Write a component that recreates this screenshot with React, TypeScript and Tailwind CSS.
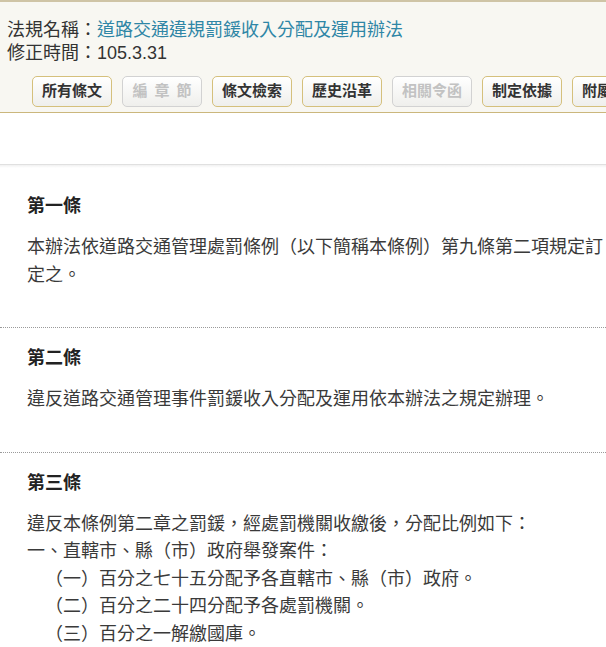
import React from 'react';

const cjk = "font-['Liberation_Sans','Noto_Sans_CJK_TC',sans-serif]";

interface ToolButton {
  label: string;
  disabled?: boolean;
  spaced?: boolean;
}

const buttons: ToolButton[] = [
  { label: '所有條文' },
  { label: '編章節', disabled: true, spaced: true },
  { label: '條文檢索' },
  { label: '歷史沿革' },
  { label: '相關令函', disabled: true },
  { label: '制定依據' },
  { label: '附屬法規' },
];

interface Article {
  title: string;
  lines: { text: string; indent?: boolean }[];
}

const articles: Article[] = [
  {
    title: '第一條',
    lines: [{ text: '本辦法依道路交通管理處罰條例（以下簡稱本條例）第九條第二項規定訂定之。' }],
  },
  {
    title: '第二條',
    lines: [{ text: '違反道路交通管理事件罰鍰收入分配及運用依本辦法之規定辦理。' }],
  },
  {
    title: '第三條',
    lines: [
      { text: '違反本條例第二章之罰鍰，經處罰機關收繳後，分配比例如下：' },
      { text: '一、直轄市、縣（市）政府舉發案件：' },
      { text: '（一）百分之七十五分配予各直轄市、縣（市）政府。', indent: true },
      { text: '（二）百分之二十四分配予各處罰機關。', indent: true },
      { text: '（三）百分之一解繳國庫。', indent: true },
      { text: '二、公路主管機關或警察機關舉發案件：' },
      { text: '（一）百分之九十九分配予各處罰機關。', indent: true },
    ],
  },
];

const ArticleBlock: React.FC<{ article: Article }> = ({ article }) => (
  <div className="border-b border-dotted border-[#9a9a9a] pl-[27px] pr-[1px] pt-[17px] pb-[38px]">
    <h3 className="text-[18px] leading-[27px] font-bold text-[#222]">{article.title}</h3>
    <div className="mt-[14px] text-[18px] leading-[27.5px] text-[#3a3a3a]">
      {article.lines.map((line, i) => (
        <p key={i} className={line.indent ? 'pl-[18px]' : ''}>
          {line.text}
        </p>
      ))}
    </div>
  </div>
);

export default function App() {
  return (
    <div className={`${cjk} w-full h-[647px] overflow-hidden bg-white`}>
      <div className="border-t-2 border-[#cfc4a6] border-b border-b-[#cbb77c] bg-[#f8f7f2] pt-[17px] pb-[5px]">
        <div className="pl-[7px] text-[18px] leading-[23px] text-[#333]">
          <div>
            法規名稱：<span className="text-[#2f86a6]">道路交通違規罰鍰收入分配及運用辦法</span>
          </div>
          <div>修正時間：105.3.31</div>
        </div>
        <div className="mt-[11px] flex gap-[10px] pl-[32px] whitespace-nowrap">
          {buttons.map((b) => (
            <div
              key={b.label}
              className={`flex h-[31px] w-[80px] shrink-0 items-center justify-center rounded-[5px] border bg-gradient-to-b from-white to-[#efefec] text-[15px] font-bold shadow-[inset_0_1px_0_#fff] ${
                b.disabled ? 'border-[#d2d2d2] text-[#c2c2c2]' : 'border-[#d5c07c] text-[#333]'
              } ${b.spaced ? 'tracking-[7px] pl-[7px]' : ''}`}
            >
              {b.label}
            </div>
          ))}
        </div>
      </div>
      <div className="h-[51px] bg-white" />
      <div className="h-[1px] bg-[#e0e0e0]" />
      <div className="h-[3px] bg-gradient-to-b from-[#f1f1f1] to-white" />
      <div className="pt-[8px]">
        {articles.map((a) => (
          <ArticleBlock key={a.title} article={a} />
        ))}
      </div>
    </div>
  );
}
